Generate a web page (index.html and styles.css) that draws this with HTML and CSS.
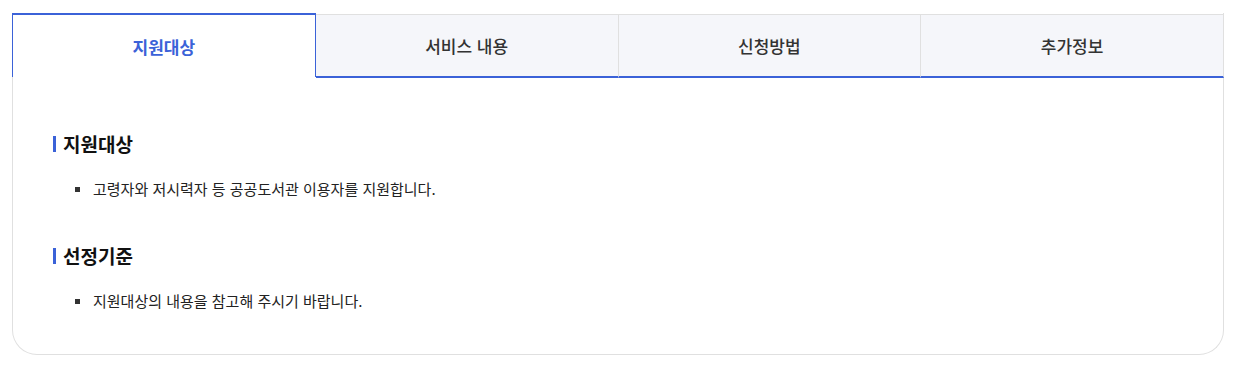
FILE: index.html
```html
<!DOCTYPE html>
<html lang="ko">
<head>
    <meta charset="UTF-8">
    <meta name="viewport" content="width=device-width, initial-scale=1.0">
    <title>지원대상</title>
    <link rel="stylesheet" href="styles.css">
</head>
<body>
    <div class="tab-box">
        <ul class="tabs">
            <li class="tab active">지원대상</li>
            <li class="tab">서비스 내용</li>
            <li class="tab">신청방법</li>
            <li class="tab">추가정보</li>
        </ul>

        <div class="tab-content">
            <h3 class="sub-title">지원대상</h3>
            <ul class="dot-list">
                <li>고령자와 저시력자 등 공공도서관 이용자를 지원합니다.</li>
            </ul>

            <h3 class="sub-title">선정기준</h3>
            <ul class="dot-list">
                <li>지원대상의 내용을 참고해 주시기 바랍니다.</li>
            </ul>
        </div>
    </div>
</body>
</html>
```

FILE: styles.css
```css
body {
    margin: 0;
    padding: 13px 0 0 12px;
    font-family: "Noto Sans CJK KR", "Noto Sans", sans-serif;
    color: #333;
    background: #fff;
}
.tab-box {
    width: 1210px;
    border: 1px solid #e0e0e0;
    border-top: 0;
    border-radius: 0 0 25px 25px;
}
.tabs {
    display: flex;
    margin: 0 -1px;
    padding: 0;
    list-style: none;
}
.tab {
    flex: 1;
    height: 61px;
    margin-top: 1px;
    display: flex;
    align-items: center;
    justify-content: center;
    background: #f5f6fa;
    border-top: 1px solid #e0e0e0;
    border-right: 1px solid #e0e0e0;
    border-bottom: 2px solid #3b62d8;
    font-size: 17px;
    font-weight: 500;
    color: #333;
}
.tab.active {
    height: 62px;
    margin-top: 0;
    background: #fff;
    color: #3b62d8;
    font-weight: 700;
    border-top: 2px solid #3b62d8;
    border-left: 1px solid #3b62d8;
    border-right: 1px solid #3b62d8;
    border-bottom: 0;
}
.tab-content {
    padding: 52px 40px 41px;
}
.sub-title {
    position: relative;
    margin: 0;
    padding-left: 10px;
    font-size: 19px;
    line-height: 28px;
    font-weight: 700;
    color: #111;
}
.sub-title::before {
    content: "";
    position: absolute;
    left: 0;
    top: 6px;
    width: 3px;
    height: 16px;
    background: #3b62d8;
}
.dot-list {
    margin: 19px 0 41px;
    padding: 0;
    list-style: none;
}
.dot-list:last-child {
    margin-bottom: 0;
}
.dot-list li {
    position: relative;
    padding-left: 40px;
    font-size: 15px;
    line-height: 24px;
    color: #222;
}
.dot-list li::before {
    content: "";
    position: absolute;
    left: 22px;
    top: 10px;
    width: 5px;
    height: 5px;
    background: #333;
}
```
